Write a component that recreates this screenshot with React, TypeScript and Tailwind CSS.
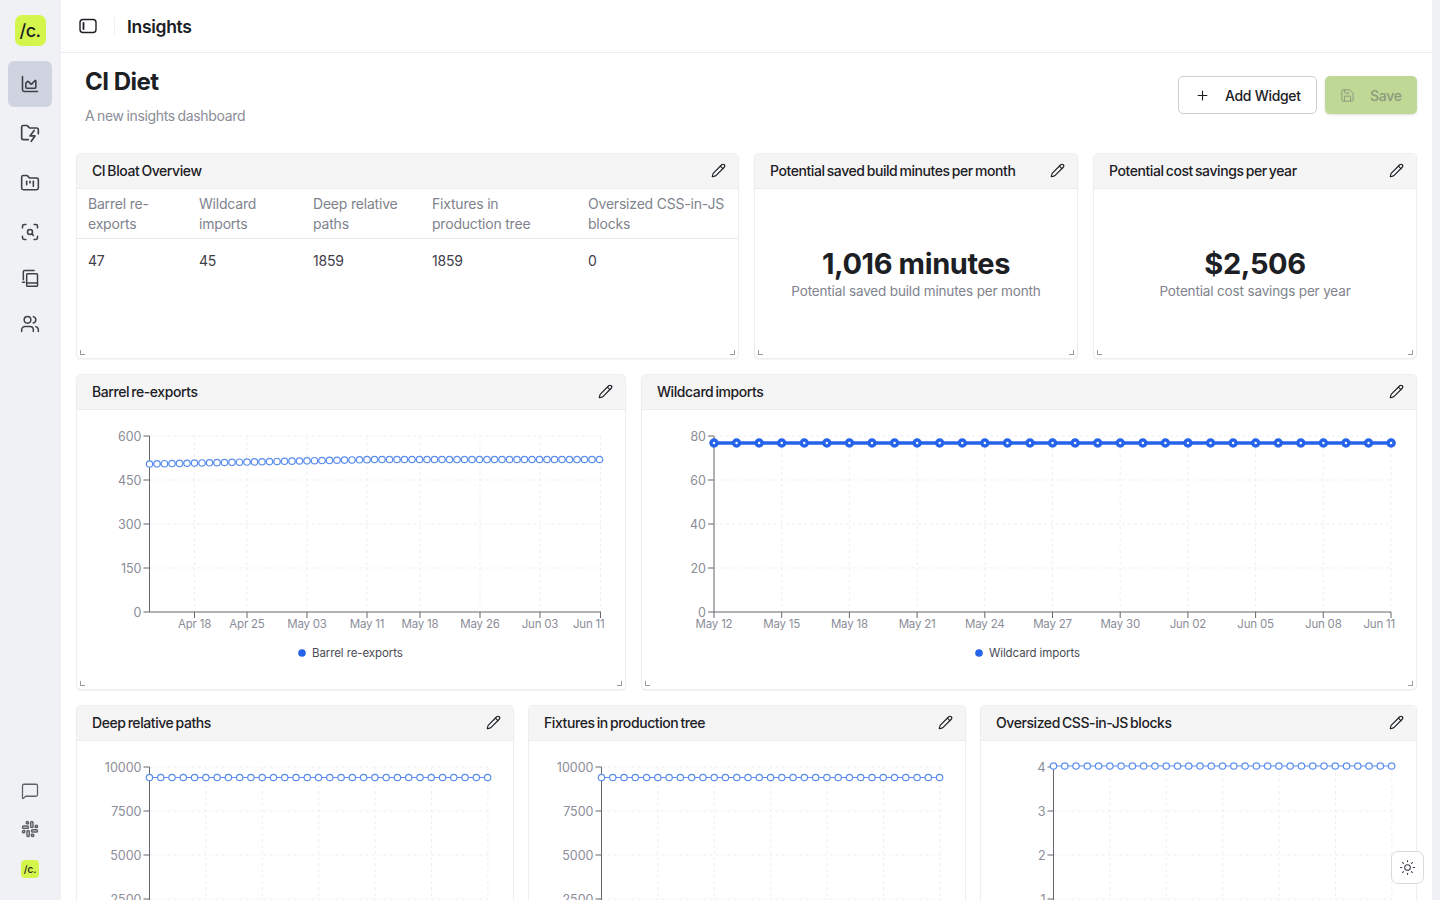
import { ChartArea, FolderKanban, MessageSquare, Pencil, Plus, Save, ScanSearch, Slack, Sun, Users } from 'lucide-react'

const font = { fontFamily: 'Inter, sans-serif' }

type Pt = { x: number; y: number }

type ChartProps = {
  axisX: number
  axisEnd: number
  yLabels: string[]
  xLabels: { label: string; x: number }[]
  points: Pt[]
  gridX: number[]
  thick?: boolean
  legend?: string
  legendX?: number
}

// chart coordinates are relative to the top left of the card body
function Chart({ axisX, axisEnd, yLabels, xLabels, points, gridX, thick, legend, legendX }: ChartProps) {
  const top = 26
  const bottom = 202
  const step = (bottom - top) / (yLabels.length - 1)
  const line = points.map((p) => `${p.x},${p.y}`).join(' ')
  return (
    <svg width="100%" height={278} className="block" style={font}>
      {yLabels.map((l, i) => {
        const y = top + i * step
        return (
          <g key={l}>
            {i < yLabels.length - 1 && (
              <line x1={axisX} x2={axisEnd} y1={y} y2={y} stroke="#efeff2" strokeDasharray="3 3" />
            )}
            <line x1={axisX - 6} x2={axisX} y1={y} y2={y} stroke="#66666e" />
            <text x={axisX - 8} y={y + 5} textAnchor="end" fontSize="12.5" fill="#8b8d98">{l}</text>
          </g>
        )
      })}
      {gridX.map((x) => (
        <line key={x} x1={x} x2={x} y1={top} y2={bottom} stroke="#efeff2" strokeDasharray="3 3" />
      ))}
      <line x1={axisX} x2={axisX} y1={top} y2={bottom} stroke="#66666e" />
      <line x1={axisX} x2={axisEnd} y1={bottom} y2={bottom} stroke="#66666e" />
      {xLabels.map((t, i) => {
        const last = i === xLabels.length - 1
        return (
          <g key={t.label}>
            <line x1={t.x} x2={t.x} y1={bottom} y2={bottom + 6} stroke="#66666e" />
            <text x={last ? t.x + 4 : t.x} y={bottom + 16} textAnchor={last ? 'end' : 'middle'} fontSize="11.5" letterSpacing="-0.2" fill="#8b8d98">{t.label}</text>
          </g>
        )
      })}
      <polyline points={line} fill="none" stroke={thick ? '#2563eb' : '#5b8def'} strokeWidth={thick ? 3.5 : 1.2} />
      {points.map((p) =>
        thick ? (
          <circle key={p.x} cx={p.x} cy={p.y} r="3" fill="#fff" stroke="#2563eb" strokeWidth="3.5" />
        ) : (
          <circle key={p.x} cx={p.x} cy={p.y} r="3.2" fill="#fff" stroke="#5b8def" strokeWidth="1.2" />
        ),
      )}
      {legend && (
        <g>
          <circle cx={legendX} cy={243} r="3.8" fill="#2563eb" />
          <text x={(legendX ?? 0) + 10} y={247} fontSize="11.5" letterSpacing="-0.1" fill="#4b4c55">{legend}</text>
        </g>
      )}
    </svg>
  )
}

function Card({ title, className, children }: { title: string; className: string; children?: React.ReactNode }) {
  return (
    <div className={`relative rounded-[4px] bg-white shadow-[0_0_0_1px_#eeeef0,0_1px_2px_#d9d9e0] ${className}`}>
      <div className="flex h-[35px] items-center justify-between rounded-t-[4px] border-b border-[#ececee] bg-[#f5f5f6] pb-[2px] pl-[15px] pr-3">
        <span className="text-[14px] font-medium tracking-[-0.42px] [word-spacing:-1.2px] text-[#1c2024]">{title}</span>
        <Pencil size={15} strokeWidth={1.8} className="text-[#1c2024]" />
      </div>
      {children}
      <span className="absolute bottom-[3px] left-[3px] h-[5px] w-[5px] border-b border-l border-[#9a9aa2]" />
      <span className="absolute bottom-[3px] right-[3px] h-[5px] w-[5px] border-b border-r border-[#9a9aa2]" />
    </div>
  )
}

function Stat({ title, value }: { title: string; value: string }) {
  return (
    <Card title={title} className="w-[322px]">
      <div className="flex h-[168px] flex-col items-center pt-[56px]">
        <div className="text-[29px] font-bold leading-[38px] tracking-[-0.4px] text-[#1c2024]">{value}</div>
        <div className="text-[13.5px] leading-[16px] tracking-[-0.15px] text-[#80838d]">{title}</div>
      </div>
    </Card>
  )
}

function FolderBolt() {
  return (
    <svg width="20" height="20" viewBox="0 0 24 24" fill="none" stroke="currentColor" strokeWidth="2" strokeLinecap="round" strokeLinejoin="round">
      <path d="M10 20H4a2 2 0 0 1-2-2V5a2 2 0 0 1 2-2h3.9a2 2 0 0 1 1.69.9l.81 1.2a2 2 0 0 0 1.67.9H20a2 2 0 0 1 2 2v5" />
      <path d="M17 9l-5 6.5h6L13.5 22" />
    </svg>
  )
}

function BookStack() {
  return (
    <svg width="20" height="20" viewBox="0 0 24 24" fill="none" stroke="currentColor" strokeWidth="1.8" strokeLinecap="round" strokeLinejoin="round">
      <path d="M17 3H5.5A1.5 1.5 0 0 0 4 4.5V14" />
      <path d="M3 17h2.5" />
      <rect x="8" y="7" width="13" height="15" rx="1" />
      <path d="M8 18h13" />
    </svg>
  )
}

function SidebarToggle() {
  return (
    <svg width="18" height="16" viewBox="0 0 18 16" fill="none" className="text-[#1c2024]">
      <rect x="1" y="1.5" width="16" height="13" rx="3" stroke="currentColor" strokeWidth="1.4" />
      <path d="M4.5 5v6" stroke="currentColor" strokeWidth="1.8" strokeLinecap="round" />
    </svg>
  )
}

const range = (n: number, f: (i: number) => Pt) => Array.from({ length: n }, (_, i) => f(i))

const barrelPts = range(61, (i) => ({ x: 72.5 + i * 7.5, y: 54 - Math.min(i, 30) * 0.15 }))
const wildcardPts = range(31, (i) => ({ x: 72 + i * 22.57, y: 33 }))
const flatPts = (y: number) => range(31, (i) => ({ x: 72.5 + i * 11.27, y }))
const flatGrid = [1, 2, 3, 4, 5, 6].map((i) => 72.5 + i * 56.4)

const barrelX = ([
  ['Apr 18', 117.5], ['Apr 25', 170], ['May 03', 230], ['May 11', 290], ['May 18', 343], ['May 26', 403], ['Jun 03', 463], ['Jun 11', 523.5],
] as [string, number][]).map(([label, x]) => ({ label, x }))
const wildcardX = ['May 12', 'May 15', 'May 18', 'May 21', 'May 24', 'May 27', 'May 30', 'Jun 02', 'Jun 05', 'Jun 08', 'Jun 11'].map((label, i) => ({ label, x: 72 + i * 67.7 }))

const tall = ['10000', '7500', '5000', '2500', '0']

export default function App() {
  return (
    <div className="flex h-[900px] w-[1440px] overflow-hidden bg-white" style={font}>
      <aside className="flex w-[61px] shrink-0 flex-col items-center bg-[#eff1f5] pr-px pt-[15px] text-[#3f4048]">
        <div className="flex h-[31px] w-[31px] items-center justify-center rounded-[7px] bg-[#d4f54c] text-[18px] font-medium tracking-[-0.5px] text-[#1c2024]">/c.</div>
        <div className="mt-[15px] flex h-[46px] w-[44px] items-center justify-center rounded-[6px] bg-[#d0d4e0]">
          <ChartArea size={20} strokeWidth={1.9} />
        </div>
        <div className="mt-[16px] flex h-[20px] items-center"><FolderBolt /></div>
        <div className="mt-[30px] flex h-[20px] items-center"><FolderKanban size={20} strokeWidth={1.9} /></div>
        <div className="mt-[29px] flex h-[20px] items-center"><ScanSearch size={20} strokeWidth={1.9} /></div>
        <div className="mt-[26px] flex h-[20px] items-center"><BookStack /></div>
        <div className="mt-[26px] flex h-[20px] items-center"><Users size={20} strokeWidth={1.8} /></div>
        <div className="mt-auto mb-[22px] flex flex-col items-center text-[#5f6068]">
          <MessageSquare size={18} strokeWidth={1.7} />
          <Slack size={18} strokeWidth={2} className="mt-[20px]" />
          <div className="mt-[22px] flex h-[18px] w-[18px] items-center justify-center rounded-[4px] bg-[#d4f54c] text-[10px] font-medium text-[#1c2024]">/c.</div>
        </div>
      </aside>
      <main className="w-[1371px] shrink-0 overflow-hidden">
        <header className="flex h-[53px] items-center border-b border-[#ececee] pl-[18px]">
          <SidebarToggle />
          <span className="ml-[17px] h-[18px] w-px bg-[#f0f0f2]" />
          <h1 className="ml-[12px] pt-[2px] text-[17.5px] font-semibold tracking-[-0.3px] text-[#1c2024]">Insights</h1>
        </header>
        <div className="flex items-start justify-between pl-[24px] pr-[15px] pt-[14px]">
          <div>
            <h2 className="text-[24px] font-bold leading-[30px] tracking-[-0.5px] text-[#1c2024]">CI Diet</h2>
            <p className="mt-[9px] text-[14px] leading-[20px] tracking-[-0.35px] [word-spacing:-0.8px] text-[#8b8d98]">A new insights dashboard</p>
          </div>
          <div className="mt-[9px] flex gap-2">
            <button className="flex h-[38px] w-[139px] items-center rounded-[5px] border border-[#cdced6] pl-[16px] text-[14px] font-medium tracking-[-0.3px] text-[#1c2024]">
              <Plus size={15} strokeWidth={1.8} />
              <span className="ml-[15px]">Add Widget</span>
            </button>
            <button className="flex h-[38px] w-[92px] items-center rounded-[5px] bg-[#c0d896] pl-[15px] text-[14px] font-medium tracking-[-0.3px] text-[#8a9a7c] shadow-sm">
              <Save size={15} strokeWidth={1.6} />
              <span className="ml-[15px]">Save</span>
            </button>
          </div>
        </div>
        <div className="ml-[16px] mt-[28px] flex w-[1339px] flex-col gap-[17px]">
          <div className="flex h-[204px] gap-[17px]">
            <Card title="CI Bloat Overview" className="w-[661px]">
              <table className="w-full table-fixed text-left text-[14px] leading-[20px] tracking-[-0.2px]">
                <thead className="text-[#80838d]">
                  <tr className="border-b border-[#e8e8ec]">
                    <th className="w-[122px] pb-[4px] pl-[11px] pt-[5px] align-top font-normal">Barrel re-<br />exports</th>
                    <th className="w-[114px] pb-[4px] pt-[5px] align-top font-normal">Wildcard<br />imports</th>
                    <th className="w-[119px] pb-[4px] pt-[5px] align-top font-normal">Deep relative<br />paths</th>
                    <th className="w-[156px] pb-[4px] pt-[5px] align-top font-normal">Fixtures in<br />production tree</th>
                    <th className="pb-[4px] pt-[5px] align-top font-normal">Oversized CSS-in-JS<br />blocks</th>
                  </tr>
                </thead>
                <tbody className="text-[#3f4048]">
                  <tr>
                    <td className="pl-[11px] pt-[12px]">47</td>
                    <td className="pt-[12px]">45</td>
                    <td className="pt-[12px]">1859</td>
                    <td className="pt-[12px]">1859</td>
                    <td className="pt-[12px]">0</td>
                  </tr>
                </tbody>
              </table>
            </Card>
            <Stat title="Potential saved build minutes per month" value="1,016 minutes" />
            <Stat title="Potential cost savings per year" value="$2,506" />
          </div>
          <div className="flex h-[314px] gap-[17px]">
            <Card title="Barrel re-exports" className="w-[548px]">
              <Chart axisX={72.5} axisEnd={524} yLabels={['600', '450', '300', '150', '0']} xLabels={barrelX} points={barrelPts} gridX={barrelX.map((t) => t.x)} legend="Barrel re-exports" legendX={225} />
            </Card>
            <Card title="Wildcard imports" className="w-[774px]">
              <Chart axisX={72} axisEnd={749} yLabels={['80', '60', '40', '20', '0']} xLabels={wildcardX} points={wildcardPts} gridX={wildcardX.map((t) => t.x)} thick legend="Wildcard imports" legendX={337} />
            </Card>
          </div>
          <div className="flex h-[314px] gap-[16px]">
            <Card title="Deep relative paths" className="w-[436px]">
              <Chart axisX={72.5} axisEnd={412} yLabels={tall} xLabels={[]} points={flatPts(36.5)} gridX={flatGrid} />
            </Card>
            <Card title="Fixtures in production tree" className="w-[436px]">
              <Chart axisX={72.5} axisEnd={412} yLabels={tall} xLabels={[]} points={flatPts(36.5)} gridX={flatGrid} />
            </Card>
            <Card title="Oversized CSS-in-JS blocks" className="w-[435px]">
              <Chart axisX={72.5} axisEnd={411} yLabels={['4', '3', '2', '1', '0']} xLabels={[]} points={flatPts(25)} gridX={flatGrid} />
            </Card>
          </div>
        </div>
      </main>
      <div className="w-[8px] shrink-0 bg-[#eff1f5]" />
      <button className="fixed left-[1391px] top-[851px] flex h-[33px] w-[33px] items-center justify-center rounded-[7px] border border-[#d9d9e0] bg-white text-[#3f4048]">
        <Sun size={17} strokeWidth={1.5} />
      </button>
    </div>
  )
}
